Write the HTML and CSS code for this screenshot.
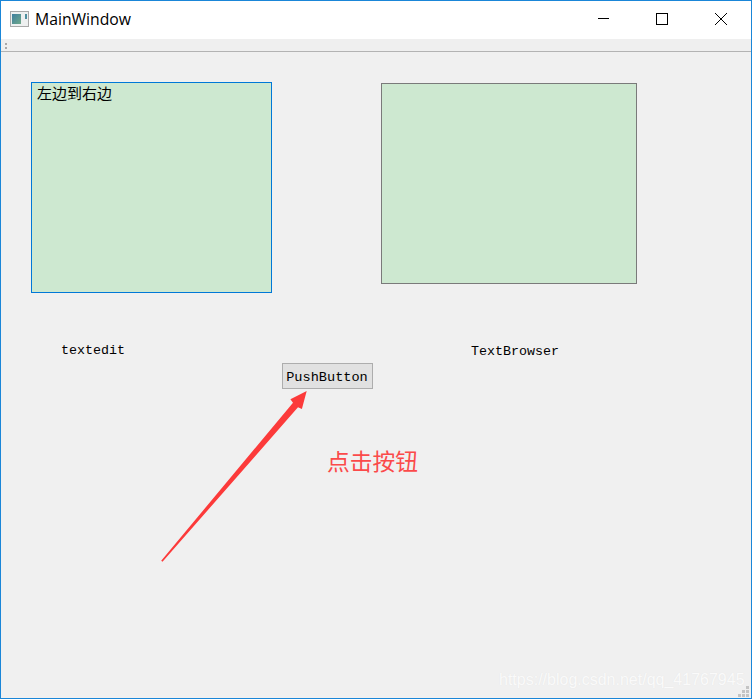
FILE: index.html
```html
<!DOCTYPE html>
<html lang="en">
<head>
  <meta charset="UTF-8">
  <meta name="viewport" content="width=device-width, initial-scale=1.0">
  <title>MainWindow</title>
  <link rel="stylesheet" href="styles.css">
</head>
<body>

  <div class="window">

    <!-- Title bar -->
    <header class="titlebar">
      <svg class="app-icon" width="20" height="16" viewBox="0 0 20 16">
        <defs>
          <linearGradient id="iconfill" x1="0" y1="0" x2="1" y2="1">
            <stop offset="0" stop-color="#3f7f9f"/>
            <stop offset="1" stop-color="#6fa98a"/>
          </linearGradient>
        </defs>
        <rect x="0.5" y="0.5" width="18" height="15" fill="#eef0f0" stroke="#a9a9a9"/>
        <rect x="2" y="3" width="9" height="10" fill="url(#iconfill)"/>
        <rect x="15" y="3" width="2" height="5" fill="#4f8f9f"/>
      </svg>
      <span class="title">MainWindow</span>
      <div class="controls">
        <svg class="control" width="12" height="12" viewBox="0 0 12 12">
          <path d="M1 5.500H12" stroke="#000" fill="none"/>
        </svg>
        <svg class="control" width="12" height="12" viewBox="0 0 12 12">
          <rect x="0.5" y="0.5" width="11" height="11" stroke="#000" fill="none"/>
        </svg>
        <svg class="control" width="12" height="12" viewBox="0 0 12 12">
          <path d="M0 0L12 12M12 0L0 12" stroke="#000" fill="none"/>
        </svg>
      </div>
    </header>

    <!-- Tool bar -->
    <div class="toolbar">
      <span class="grip"><i></i><i></i></span>
    </div>

    <!-- Central widget, fixed geometry like a Qt form -->
    <main class="canvas">
      <div class="text-edit">左边到右边</div>
      <div class="text-browser"></div>
      <div class="label label-edit">textedit</div>
      <div class="label label-browser">TextBrowser</div>
      <button class="push-button">PushButton</button>

      <svg class="arrow" width="160" height="180" viewBox="0 0 160 180">
        <path d="M0.200 171.700L132 13.700L129.400 10.300L145.700 2L140.900 20L137 18.300L1.500 172.800Z" fill="#fc3a3a"/>
      </svg>
      <div class="note">点击按钮</div>

      <div class="watermark">https://blog.csdn.net/qq_41767945</div>
      <svg class="size-grip" width="11" height="11" viewBox="0 0 11 11" fill="#c4c4c4">
        <rect x="8" y="0" width="3" height="3"/>
        <rect x="4" y="4" width="3" height="3"/>
        <rect x="8" y="4" width="3" height="3"/>
        <rect x="0" y="8" width="3" height="3"/>
        <rect x="4" y="8" width="3" height="3"/>
        <rect x="8" y="8" width="3" height="3"/>
      </svg>
    </main>

  </div>

</body>
</html>
```

FILE: styles.css
```css
html, body {
  margin: 0;
  padding: 0;
}

body {
  width: 752px;
  height: 699px;
  overflow: hidden;
  font-family: "Liberation Mono", "Noto Sans CJK SC", monospace;
}

/* Window frame */
.window {
  box-sizing: border-box;
  width: 752px;
  height: 699px;
  border: 1px solid #1a86d8;
  background-color: #f0f0f0;
  display: flex;
  flex-direction: column;
}

/* Title bar */
.titlebar {
  box-sizing: border-box;
  height: 38px;
  flex: none;
  background-color: #fff;
  display: flex;
  align-items: center;
  padding: 0 0 2px 9px;
}

.app-icon {
  margin-right: 5px;
}

.title {
  font-family: "Open Sans", "Noto Sans", sans-serif;
  font-size: 15.750px;
  color: #000;
  flex: 1;
}

.controls {
  display: flex;
  align-items: center;
  gap: 47px;
  padding-right: 24px;
}

.control {
  display: block;
}

/* Tool bar */
.toolbar {
  box-sizing: border-box;
  height: 13px;
  flex: none;
  background-color: #efefef;
  border-bottom: 1px solid #b3b3b3;
  display: flex;
  align-items: center;
  padding-left: 4px;
}

.grip {
  display: flex;
  flex-direction: column;
  gap: 2px;
  margin-top: 1px;
}

.grip i {
  display: block;
  width: 2px;
  height: 2px;
  background-color: #a8a8a8;
}

/* Central widget */
.canvas {
  position: relative;
  flex: 1;
  background-color: #f0f0f0;
}

.text-edit,
.text-browser {
  position: absolute;
  box-sizing: border-box;
  background-color: #cde8d0;
}

.text-edit {
  left: 30px;
  top: 30px;
  width: 241px;
  height: 211px;
  border: 1px solid #0078d7;
  padding: 1px 5px;
  font-family: "Noto Sans CJK SC", sans-serif;
  font-size: 15px;
  line-height: 18px;
  color: #000;
}

.text-browser {
  left: 380px;
  top: 31px;
  width: 256px;
  height: 201px;
  border: 1px solid #7a7a7a;
}

.label {
  position: absolute;
  font-size: 13.330px;
  line-height: 16px;
  color: #000;
}

.label-edit {
  left: 60px;
  top: 291px;
}

.label-browser {
  left: 470px;
  top: 292px;
}

.push-button {
  position: absolute;
  left: 281px;
  top: 311px;
  box-sizing: border-box;
  width: 91px;
  height: 26px;
  padding: 2px 1px 0 0;
  background-color: #e1e1e1;
  border: 1px solid #adadad;
  font-family: "Liberation Mono", monospace;
  font-size: 13.600px;
  color: #000;
}

.arrow {
  position: absolute;
  left: 160px;
  top: 337px;
}

.note {
  position: absolute;
  left: 326px;
  top: 394px;
  font-family: "Noto Sans CJK SC", sans-serif;
  font-size: 22.750px;
  line-height: 30px;
  color: #fb4a4a;
}

.watermark {
  position: absolute;
  left: 498px;
  top: 618px;
  font-family: "Liberation Sans", sans-serif;
  font-size: 16px;
  line-height: 20px;
  color: #fafafa;
  text-shadow: 0 0 1px #e2e2e2;
  white-space: nowrap;
}

.size-grip {
  position: absolute;
  right: 2px;
  bottom: 1px;
}
```
